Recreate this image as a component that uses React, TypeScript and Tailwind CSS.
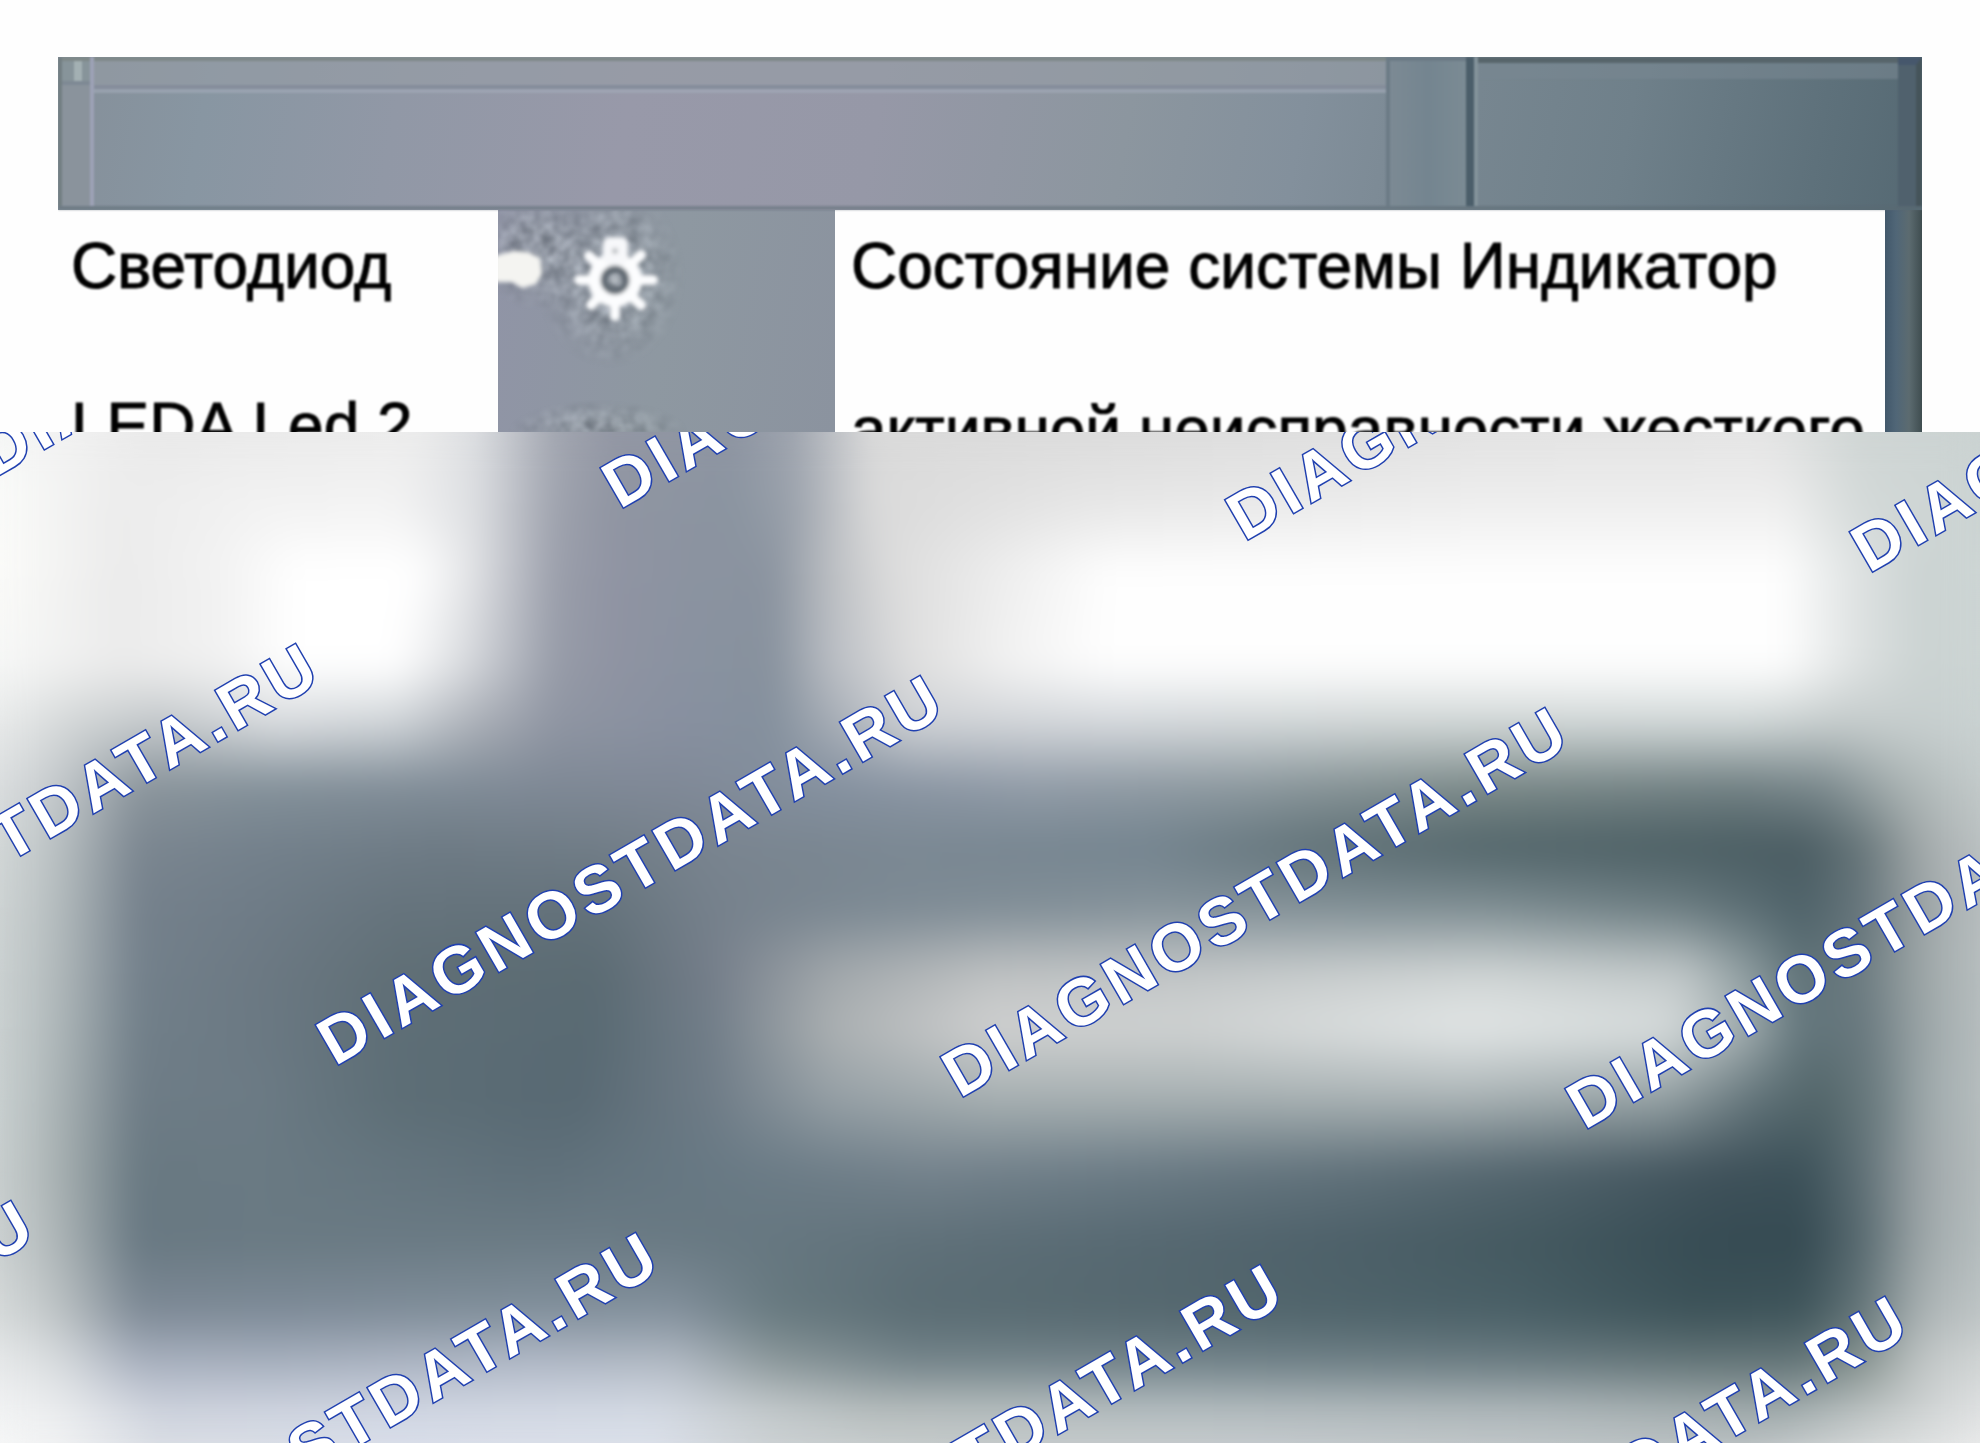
import React from "react";

type Stop = [number, string];
type Band = { y: number; stops: Stop[] };

/* Colour rows of the soft area: y in percent of its height, stops in percent of its width. */
const bands: Band[] = [
  { y: 0, stops: [[0, "#f6f7f6"], [4, "#f0f0f0"], [8, "#e9e9e9"], [21, "#ececec"], [24, "#dcdee1"], [28, "#a3a7b1"], [31, "#9397a4"], [37, "#8e95a2"], [40, "#9ea4ae"], [44, "#dadada"], [60, "#dcdcdc"], [75, "#e2e2e2"], [89, "#e4e4e4"], [94, "#cfd5d4"], [100, "#cbd3d2"]] },
  { y: 7, stops: [[0, "#fafbf9"], [6, "#ececec"], [13, "#f2f2f2"], [20, "#f3f3f3"], [24, "#dddfe2"], [28, "#9fa3ae"], [31, "#9095a2"], [37, "#8a94a0"], [40, "#9aa1ab"], [44, "#dadada"], [55, "#e6e6e6"], [75, "#eeeeee"], [90, "#eeeeee"], [94, "#d3d9d8"], [100, "#cbd3d2"]] },
  { y: 14, stops: [[0, "#fbfbf9"], [6, "#ebebeb"], [11, "#f2f2f2"], [15, "#ffffff"], [21, "#ffffff"], [23.5, "#e7e8ea"], [28, "#9b9fab"], [31, "#9094a3"], [35, "#8b93a0"], [39, "#8a939f"], [42, "#bcbfc3"], [45, "#dcdcdc"], [51, "#efefef"], [56, "#fefefe"], [90, "#fefefe"], [94, "#dde1e1"], [97, "#cbd3d2"], [100, "#cdd5d4"]] },
  { y: 23, stops: [[0, "#f6f7f6"], [6, "#ebebeb"], [11, "#f1f1f1"], [15, "#ffffff"], [20, "#ffffff"], [23, "#dfe1e4"], [28, "#979ca8"], [31, "#8f93a2"], [35, "#8992a0"], [39, "#87919d"], [42, "#b9bdc3"], [46, "#dedede"], [51, "#f2f2f2"], [56, "#fefefe"], [90, "#fefefe"], [94, "#dce0e0"], [97, "#cbd3d2"], [100, "#ccd4d3"]] },
  { y: 29, stops: [[0, "#e8eaea"], [4, "#cfd3d4"], [8, "#c0c5c8"], [14, "#d8dbde"], [20, "#cdd2d6"], [24, "#a9aeb6"], [28, "#8f95a2"], [34, "#8890a0"], [39, "#84909d"], [42, "#a4abb4"], [46, "#cdd0d4"], [56, "#d2d6da"], [70, "#ced4d4"], [88, "#ced5d5"], [93, "#c3caca"], [100, "#c9d1d1"]] },
  { y: 35, stops: [[0, "#dcdfe0"], [3, "#c2c7ca"], [7, "#8b959c"], [13, "#84919a"], [22, "#818d98"], [28, "#7f8996"], [34, "#808997"], [42, "#8591a0"], [52, "#929ca8"], [63, "#8d999f"], [75, "#7c8a89"], [88, "#728184"], [92, "#7b898d"], [96, "#a9b2b2"], [100, "#c4cbcb"]] },
  { y: 41, stops: [[0, "#d4d9d9"], [3, "#b8bfc1"], [7, "#7b8690"], [13, "#74818c"], [22, "#6e7b85"], [30, "#717d87"], [37, "#7a8590"], [46, "#7b8893"], [58, "#74848f"], [66, "#627379"], [75, "#53666b"], [85, "#4c5f64"], [91, "#4a5c62"], [94, "#667579"], [97, "#a1a8a9"], [100, "#bcc2c3"]] },
  { y: 47, stops: [[0, "#d0d5d5"], [3, "#b3bbbd"], [7, "#75818c"], [13, "#6f7c87"], [20, "#66747d"], [30, "#64727b"], [36, "#76818c"], [44, "#7c8993"], [58, "#85929a"], [75, "#7f8e93"], [85, "#6b7c81"], [91, "#4e6269"], [94, "#66757b"], [97, "#9ba3a5"], [100, "#b9bfc0"]] },
  { y: 53.5, stops: [[0, "#cdd3d3"], [3, "#b0b8ba"], [7, "#73808b"], [13, "#6c7983"], [20, "#606f76"], [30, "#5b6b73"], [36, "#757e8a"], [42, "#a1a7ab"], [50, "#bec1c2"], [60, "#c2c6c7"], [75, "#cfd4d4"], [85, "#c0c7c8"], [88, "#92a0a3"], [91, "#5f7278"], [94, "#6c7b80"], [97, "#9ca5a6"], [100, "#b9c0c1"]] },
  { y: 59, stops: [[0, "#ccd2d2"], [3, "#adb6b8"], [7, "#717f89"], [13, "#6b7983"], [20, "#5e6e76"], [30, "#596a73"], [36, "#727e89"], [42, "#abb0b2"], [50, "#cfd0d0"], [60, "#cfd2d2"], [74, "#e2e6e6"], [84, "#d8dddd"], [88, "#a5b0b2"], [91, "#63767c"], [94, "#67777d"], [97, "#99a3a5"], [100, "#b8bfc0"]] },
  { y: 66, stops: [[0, "#cbd2d2"], [3, "#a9b2b4"], [7, "#6e7c86"], [13, "#6c7b85"], [20, "#5d6e76"], [29, "#586973"], [36, "#6f7c87"], [42, "#959fa5"], [50, "#a6afb1"], [63, "#a6afb1"], [74, "#a9b2b4"], [84, "#95a1a4"], [89, "#5e7076"], [92, "#526569"], [95, "#6f7f83"], [97, "#9ba6a8"], [100, "#b8bfc0"]] },
  { y: 73, stops: [[0, "#cad0d0"], [3, "#a7b0b1"], [7, "#697982"], [13, "#6a7a83"], [27, "#5f707a"], [36, "#687984"], [47, "#75838d"], [57, "#6c7c86"], [69, "#60717a"], [79, "#50626b"], [87, "#40525b"], [91, "#3c5159"], [94, "#5e6f75"], [97, "#9ba3a6"], [100, "#b6bdbe"]] },
  { y: 80, stops: [[0, "#cdd2d2"], [3, "#acb4b6"], [7, "#687882"], [14, "#6a7a83"], [30, "#6b7b85"], [39, "#667780"], [47, "#5f7079"], [57, "#576972"], [67, "#4e616a"], [77, "#445960"], [86, "#374c54"], [91, "#354a52"], [94, "#586a70"], [97, "#9ca5a7"], [100, "#b7bfc0"]] },
  { y: 87, stops: [[0, "#d7dbdb"], [3, "#bcc2c4"], [7, "#7e8a96"], [14, "#7e8b98"], [27, "#82909c"], [34, "#84919d"], [39, "#687a80"], [46, "#5b6d74"], [60, "#54676e"], [76, "#4a6067"], [86, "#3c5258"], [91, "#3f555b"], [94, "#647579"], [97, "#a9b1b2"], [100, "#c0c6c7"]] },
  { y: 92, stops: [[0, "#e7e9ea"], [3, "#d7dbde"], [7, "#a9b1bf"], [14, "#a7b0be"], [27, "#b1b9c7"], [34, "#b2bac4"], [39, "#8d999c"], [46, "#74848a"], [60, "#72838a"], [76, "#6c7d83"], [86, "#657679"], [91, "#657679"], [94, "#87938f"], [97, "#c0c5c5"], [100, "#d2d6d6"]] },
  { y: 96.5, stops: [[0, "#f1f2f3"], [3, "#e9ebed"], [8, "#cbd0db"], [20, "#ced4e1"], [33, "#d2d8e2"], [38, "#c4cacd"], [44, "#b4bbbb"], [60, "#b2bbbe"], [78, "#abb4b7"], [90, "#9ba6a7"], [95, "#bdc3c3"], [100, "#dfe1e2"]] },
  { y: 100, stops: [[0, "#f6f7f7"], [3, "#f1f2f3"], [8, "#dbdfe5"], [20, "#dadfea"], [33, "#dce1ea"], [39, "#cdd2d4"], [48, "#c7cccc"], [64, "#c7cccf"], [78, "#c1c7c9"], [88, "#bdc3c5"], [95, "#dadddd"], [100, "#e9eaea"]] },
];

const toGradient = (stops: Stop[]) =>
  `linear-gradient(90deg, ${stops.map(([x, c]) => `${c} ${x}%`).join(", ")})`;

function ColourMesh() {
  return (
    <>
      {bands.map((band, i) => {
        const mask =
          i === 0
            ? undefined
            : `linear-gradient(180deg, transparent ${bands[i - 1].y}%, #000 ${band.y}%)`;
        return (
          <div
            key={band.y}
            className="absolute inset-0"
            style={{ backgroundImage: toGradient(band.stops), maskImage: mask }}
          />
        );
      })}
    </>
  );
}

/* The plain mesh lies under the blurred one so that the blur does not fade out at the edges. */
function SoftBackdrop() {
  return (
    <div className="absolute inset-0 overflow-hidden" aria-hidden="true">
      <div className="absolute inset-0">
        <ColourMesh />
      </div>
      <div className="absolute inset-0 blur-[16px]">
        <ColourMesh />
      </div>
    </div>
  );
}

/* Each row: where its first mark starts, and how many marks it holds. */
const watermarkRows = [
  { start: "pl-[1050px]", count: 1 },
  { start: "pl-[525px]", count: 2 },
  { start: "pl-0", count: 3 },
  { start: "pl-[525px]", count: 3 },
  { start: "pl-[1050px]", count: 2 },
  { start: "pl-[1575px]", count: 1 },
];

function Watermarks() {
  return (
    <div className="absolute left-0 top-0 size-0 origin-top-left -rotate-30">
      <div className="absolute left-[-1077px] top-[-18px] w-[3700px]">
        {watermarkRows.map(({ start, count }, row) => (
          <div key={row} className={`flex h-[340px] ${start}`}>
            {Array.from({ length: count }, (_, i) => (
              <span
                key={i}
                className="w-[1050px] shrink-0 whitespace-nowrap font-['Liberation_Sans',Arial,sans-serif] text-[66px] leading-[64px] font-bold tracking-[5px] text-white [-webkit-text-stroke:3px_#2040b0] [paint-order:stroke_fill]"
              >
                DIAGNOSTDATA.RU
              </span>
            ))}
          </div>
        ))}
      </div>
    </div>
  );
}

function GearLamp() {
  return (
    <svg viewBox="0 0 337 222" className="block h-[222px] w-full" preserveAspectRatio="xMinYMin slice" aria-hidden="true">
      <defs>
        <filter id="grain" x="0" y="0" width="100%" height="100%" colorInterpolationFilters="sRGB">
          <feTurbulence type="fractalNoise" baseFrequency="0.07" numOctaves="2" seed="7" />
          <feColorMatrix values="1.1 0 0 0 0.02  1.1 0 0 0 0.05  1.1 0 0 0 0.07  0 0 0 0 0.5" />
          <feGaussianBlur stdDeviation="1" />
        </filter>
        <filter id="soften" x="-20%" y="-20%" width="140%" height="140%">
          <feGaussianBlur stdDeviation="2" />
        </filter>
        <radialGradient id="halo">
          <stop offset="0.3" stopColor="#fff" stopOpacity="0.8" />
          <stop offset="1" stopColor="#fff" stopOpacity="0" />
        </radialGradient>
        <mask id="haloMask">
          <ellipse cx="112" cy="66" rx="76" ry="92" fill="url(#halo)" />
          <ellipse cx="36" cy="40" rx="56" ry="60" fill="url(#halo)" />
          <ellipse cx="100" cy="222" rx="90" ry="32" fill="url(#halo)" />
        </mask>
      </defs>
      <rect width="337" height="222" filter="url(#grain)" mask="url(#haloMask)" />
      <g filter="url(#soften)">
        <path d="M-4 46 L16 41 L30 42 L42 48 L44 64 L38 74 L24 78 L14 72 H-4Z" fill="#f4f4f1" />
        <circle cx="117" cy="70" r="20" fill="none" stroke="#fcfdfe" strokeWidth="14" />
        <g stroke="#fcfdfe" strokeWidth="10" strokeLinecap="round">
          <path d="M96 70H81M138 70h17M117 92v14M102 86l-9 9M133 86l10 9M100 54l-9-8M133 54l10-9" />
        </g>
        <rect x="105" y="27" width="25" height="28" rx="7" fill="#f7f8fa" />
        <circle cx="117" cy="41" r="3" fill="#b9bdc0" />
        <circle cx="117" cy="70" r="11" fill="none" stroke="#626a73" strokeWidth="7" />
        <circle cx="117" cy="70" r="4" fill="#b4bac0" />
      </g>
    </svg>
  );
}

function PanelText({ lines, spacing }: { lines: string[]; spacing: string }) {
  return (
    <div
      className={`whitespace-nowrap font-['Liberation_Sans',Arial,sans-serif] text-[64px] text-black blur-[1px] [-webkit-text-stroke:1px_#000] ${spacing}`}
    >
      {lines.map((line) => (
        <p key={line}>{line}</p>
      ))}
    </div>
  );
}

export default function App() {
  return (
    <main className="flex min-h-screen flex-col overflow-hidden bg-[#fefefe]">
      <section className="mx-[58px] mt-[57px] h-[375px] overflow-hidden bg-[linear-gradient(100deg,#858f99_0%,#8896a2_8%,#9198a6_18%,#9899a9_30%,#9698a7_43%,#8c969f_56%,#83909c_65%,#778690_74%,#6f808a_82%,#5e717b_92%,#526670_100%)]">
        <div className="flex h-[153px] border-b-4 border-[#5a6872]/50 blur-[1px]">
          <div className="w-9 border-l-4 border-r-4 border-l-[#727e82] border-r-[#9da2b6] bg-[#8a939c]">
            <div className="h-7 border-y-4 border-t-[#7e8888] border-b-[#7e8994] bg-[#87949a]">
              <div className="ml-3 h-full w-2 bg-[#a3b0b3]" />
            </div>
          </div>
          <div className="flex flex-[1295] flex-col">
            <div className="h-8 border-y-4 border-t-[#7e8888] border-b-[#858d9b] bg-[#969ca5]/60" />
            <div className="h-1 bg-[#a4abb9]/60" />
          </div>
          <div className="flex-[76] border-l-4 border-t-4 border-[#6c7b86] bg-[linear-gradient(90deg,#7c8a94,#748590_50%,#7b8b94)]" />
          <div className="w-2 bg-[#4b5e6a]" />
          <div className="w-1 bg-[#84939b]" />
          <div className="flex-[421] border-t-6 border-[#57656b]">
            <div className="h-4 bg-[#788791]/60" />
          </div>
          <div className="w-6 border-r-6 border-t-8 border-[#45545a] border-t-[#46576c] bg-[#50616d]" />
        </div>
        <div className="flex h-[222px]">
          <div className="flex-[440] overflow-hidden bg-[#fefefe]">
            <PanelText spacing="-mt-6 pl-[13px] leading-[160px]" lines={["Светодиод", "LEDA Led 2"]} />
          </div>
          <div className="flex-[337] overflow-hidden bg-[linear-gradient(100deg,#9094a6,#8e98a1_50%,#8b939f)]">
            <GearLamp />
          </div>
          <div className="flex-[1050] overflow-hidden bg-[#fefefe]">
            <PanelText
              spacing="-mt-[26px] pl-4 leading-[164px]"
              lines={["Состояние системы Индикатор", "активной неисправности жесткого"]}
            />
          </div>
          <div className="flex-[37] bg-[linear-gradient(90deg,#42586b,#506677_30%,#5c6b70_65%,#3f4d50)]" />
        </div>
      </section>
      <section className="relative flex-1 overflow-hidden">
        <SoftBackdrop />
        <Watermarks />
      </section>
    </main>
  );
}
